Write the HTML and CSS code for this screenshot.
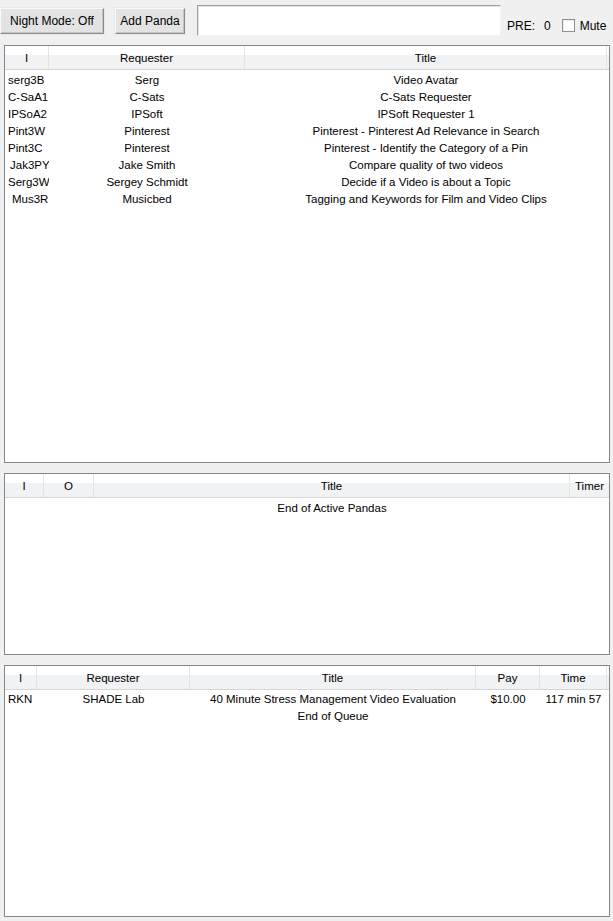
FILE: index.html
```html
<!DOCTYPE html>
<html>
<head>
<meta charset="utf-8">
<title>Panda Crazy</title>
<link rel="stylesheet" href="styles.css">
</head>
<body>
<div class="topbar">
  <button class="btn btn-night">Night Mode: Off</button>
  <button class="btn btn-add">Add Panda</button>
  <input class="entry" type="text">
  <span class="pre">PRE:</span>
  <span class="pre-val">0</span>
  <span class="check"></span>
  <span class="mute">Mute</span>
</div>

<div class="panel panel-hits">
  <div class="grid cols-hits head">
    <div class="hcell">I</div>
    <div class="hcell">Requester</div>
    <div class="hcell">Title</div>
  </div>
  <div class="rows rows-hits">
    <div class="grid cols-hits row"><div class="cell id">serg3B</div><div class="cell">Serg</div><div class="cell">Video Avatar</div></div>
    <div class="grid cols-hits row"><div class="cell id">C-SaA1</div><div class="cell">C-Sats</div><div class="cell">C-Sats Requester</div></div>
    <div class="grid cols-hits row"><div class="cell id">IPSoA2</div><div class="cell">IPSoft</div><div class="cell">IPSoft Requester 1</div></div>
    <div class="grid cols-hits row"><div class="cell id">Pint3W</div><div class="cell">Pinterest</div><div class="cell">Pinterest - Pinterest Ad Relevance in Search</div></div>
    <div class="grid cols-hits row"><div class="cell id">Pint3C</div><div class="cell">Pinterest</div><div class="cell">Pinterest - Identify the Category of a Pin</div></div>
    <div class="grid cols-hits row"><div class="cell id ind2">Jak3PY</div><div class="cell">Jake Smith</div><div class="cell">Compare quality of two videos</div></div>
    <div class="grid cols-hits row"><div class="cell id">Serg3W</div><div class="cell">Sergey Schmidt</div><div class="cell">Decide if a Video is about a Topic</div></div>
    <div class="grid cols-hits row"><div class="cell id ind">Mus3R</div><div class="cell">Musicbed</div><div class="cell">Tagging and Keywords for Film and Video Clips</div></div>
  </div>
</div>

<div class="panel panel-active">
  <div class="grid cols-active head">
    <div class="hcell">I</div>
    <div class="hcell">O</div>
    <div class="hcell">Title</div>
    <div class="hcell clip">Timer</div>
  </div>
  <div class="rows rows-active">
    <div class="grid cols-active row"><div class="cell"></div><div class="cell"></div><div class="cell">End of Active Pandas</div><div class="cell"></div></div>
  </div>
</div>

<div class="panel panel-queue">
  <div class="grid cols-queue head">
    <div class="hcell">I</div>
    <div class="hcell">Requester</div>
    <div class="hcell">Title</div>
    <div class="hcell">Pay</div>
    <div class="hcell">Time</div>
  </div>
  <div class="rows rows-queue">
    <div class="grid cols-queue row"><div class="cell id">RKN</div><div class="cell">SHADE Lab</div><div class="cell">40 Minute Stress Management Video Evaluation</div><div class="cell">$10.00</div><div class="cell">117 min 57</div></div>
    <div class="grid cols-queue row"><div class="cell"></div><div class="cell"></div><div class="cell">End of Queue</div><div class="cell"></div><div class="cell"></div></div>
  </div>
</div>
</body>
</html>
```

FILE: styles.css
```css
* { box-sizing: border-box; }
html, body {
  margin: 0;
  padding: 0;
  background: #f0f0f0;
  font-family: "Liberation Sans", Arial, sans-serif;
  font-size: 12px;
  color: #000;
}
body {
  width: 613px;
  height: 921px;
  overflow: hidden;
  display: flex;
  flex-direction: column;
}
.topbar {
  height: 45px;
  display: flex;
  align-items: flex-start;
  flex: none;
}
.btn {
  font-family: inherit;
  font-size: 12px;
  color: #000;
  margin-top: 8px;
  height: 26px;
  padding: 0;
  background: #e3e3e3;
  border: 1px solid;
  border-color: #fafafa #8c8c8c #8c8c8c #fafafa;
  box-shadow: inset -1px -1px 0 #c4c4c4;
  outline: 1px solid #e8e8e8;
}
.btn-night { width: 104px; margin-left: 0; }
.btn-add { width: 70px; margin-left: 11px; }
.entry {
  margin-left: 12px;
  margin-top: 5px;
  width: 304px;
  height: 31px;
  background: #fff;
  border: 1px solid;
  border-color: #a0a0a0 #f4f4f4 #f4f4f4 #a0a0a0;
  box-shadow: inset 1px 1px 0 #e3e3e3;
  padding: 0;
  outline: none;
}
.pre { margin-left: 6px; margin-top: 19px; line-height: 14px; }
.pre-val { margin-left: 9px; margin-top: 19px; line-height: 14px; }
.check {
  margin-left: 11px;
  margin-top: 19px;
  width: 13px;
  height: 13px;
  background: #fff;
  border: 1px solid #8e8f8f;
  box-shadow: inset 1px 1px 0 #f0f0f0;
}
.mute { margin-left: 5px; margin-top: 19px; line-height: 14px; }

.panel {
  flex: none;
  margin: 0 3px 0 4px;
  background: #fff;
  border: 1px solid #828790;
  overflow: hidden;
  font-size: 11.5px;
}
.panel-hits { height: 418px; }
.panel-active { height: 182px; margin-top: 10px; }
.panel-queue { height: 252px; margin-top: 10px; }

.grid { display: grid; }
.cols-hits { grid-template-columns: 44px 196px 362px; }
.cols-active { grid-template-columns: 39px 50px 476px 37px; }
.cols-queue { grid-template-columns: 32px 153px 286px 64px 67px; }

.head {
  height: 24px;
  background: linear-gradient(#ffffff 0%, #ffffff 40%, #f1f2f4 41%, #f1f2f4 100%);
  border-bottom: 1px solid #d5d5d5;
}
.hcell {
  border-right: 1px solid #e3e4e6;
  text-align: center;
  line-height: 24px;
  white-space: nowrap;
  overflow: hidden;
}
.hcell.clip { text-align: left; padding-left: 5px; border-right: 0; }
.rows { display: flex; flex-direction: column; }
.rows-hits { padding-top: 2px; }
.rows-active { padding-top: 2px; }
.rows-queue { padding-top: 1px; }
.row { height: 17px; }
.cell {
  line-height: 17px;
  text-align: center;
  white-space: nowrap;
  overflow: hidden;
}
.cell.id { text-align: left; padding-left: 3px; }
.cell.id.ind { padding-left: 7px; }
.cell.id.ind2 { padding-left: 5px; }
```
